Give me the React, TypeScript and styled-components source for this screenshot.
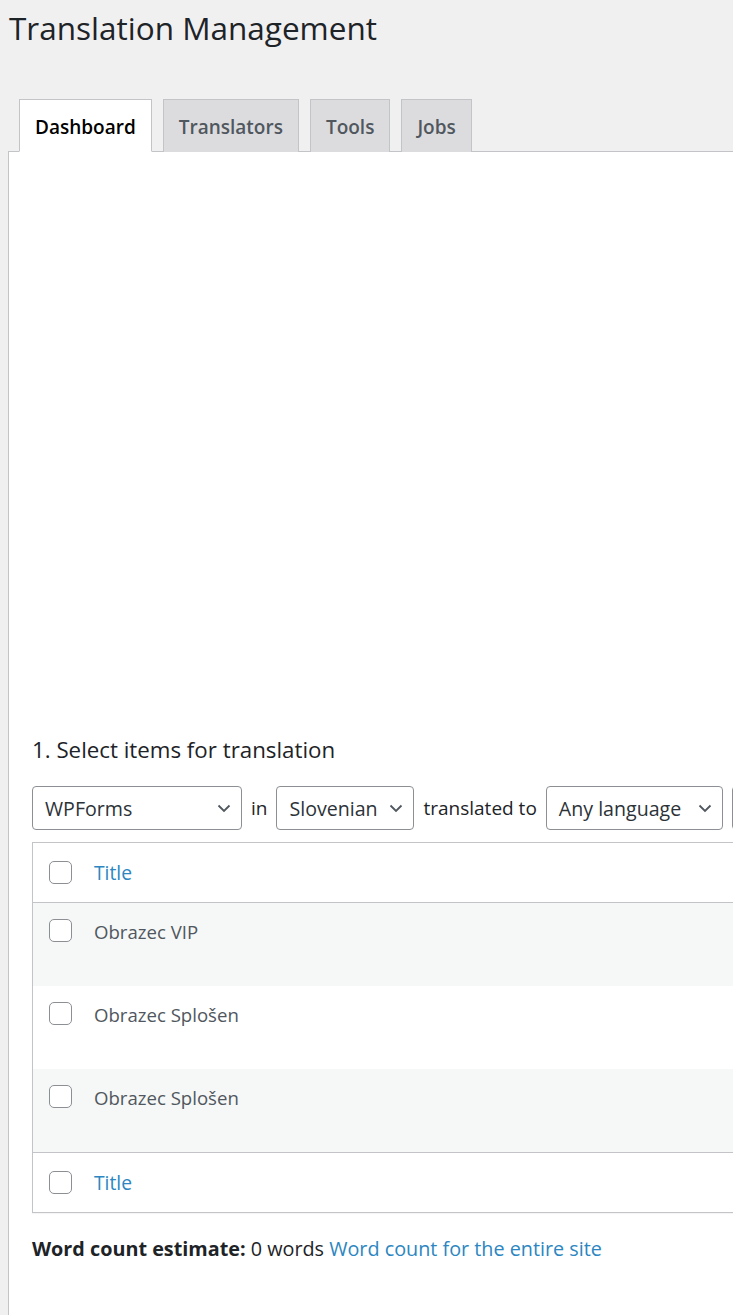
import styled, { createGlobalStyle } from "styled-components"

const GlobalStyle = createGlobalStyle`
body {
  margin: 0;
  background: #f0f0f1;
  font-family: "Open Sans", "Noto Sans", sans-serif;
  color: #3c434a;
}
`

const Page = styled.div`
  padding-left: 8px;
  min-height: 1315px;
  display: flex;
  flex-direction: column;
  overflow: hidden;
`

const Title = styled.h1`
  margin: 0;
  padding: 8px 0 0 1px;
  font-size: 31.5px;
  font-weight: 400;
  line-height: 40px;
  color: #1d2327;
`

const TabBar = styled.div`
  display: flex;
  gap: 11px;
  margin-top: 51px;
  padding-left: 11px;
  border-bottom: 1px solid #c3c4c7;
`

const Tab = styled.div<{ $active?: boolean }>`
  height: 53px;
  padding: 2px 15px 0;
  display: flex;
  align-items: center;
  font-size: 19px;
  font-weight: 600;
  border: 1px solid #c3c4c7;
  border-bottom: none;
  margin-bottom: -1px;
  box-sizing: border-box;
  background: ${(p) => (p.$active ? "#fff" : "#dcdcde")};
  color: ${(p) => (p.$active ? "#000" : "#50575e")};
  ${(p) => p.$active && "border-bottom: 1px solid #fff;"}
`

const Panel = styled.div`
  flex: 1;
  background: #fff;
  border-left: 1px solid #c3c4c7;
  padding-left: 23px;
  overflow: hidden;
`

const ChartArea = styled.div`
  height: 583px;
`

const SectionTitle = styled.h2`
  margin: 0;
  font-size: 22.3px;
  font-weight: 400;
  line-height: 30px;
  color: #1d2327;
`

const FilterRow = styled.div`
  display: flex;
  align-items: center;
  gap: 9px;
  margin-top: 21px;
  white-space: nowrap;
  font-size: 19px;
  color: #1d2327;
`

const Select = styled.div<{ $width: number }>`
  flex: none;
  width: ${(p) => p.$width}px;
  height: 44px;
  box-sizing: border-box;
  border: 1px solid #8c8f94;
  border-radius: 4px;
  padding: 0 9px 0 12px;
  display: flex;
  align-items: center;
  justify-content: space-between;
  font-size: 19.6px;
  color: #2c3338;
  background: #fff;
`

const Table = styled.div`
  width: 1000px;
  margin-top: 12px;
  border: 1px solid #c3c4c7;
  box-shadow: 0 1px 1px rgba(0, 0, 0, 0.04);
`

const Row = styled.div<{ $kind: "head" | "odd" | "even" | "foot" }>`
  display: flex;
  align-items: ${(p) => (p.$kind === "head" || p.$kind === "foot" ? "center" : "flex-start")};
  height: ${(p) => (p.$kind === "head" || p.$kind === "foot" ? 60 : 83)}px;
  box-sizing: border-box;
  padding: ${(p) => (p.$kind === "head" || p.$kind === "foot" ? "0" : "16px 0 0")} 16px;
  background: ${(p) => (p.$kind === "odd" ? "#f6f7f7" : "#fff")};
  ${(p) => p.$kind === "head" && "border-bottom: 1px solid #c3c4c7;"}
  ${(p) => p.$kind === "foot" && "border-top: 1px solid #c3c4c7;"}
`

const Check = styled.span`
  flex: none;
  width: 23px;
  height: 23px;
  box-sizing: border-box;
  border: 1px solid #8c8f94;
  border-radius: 5px;
  background: #fff;
  margin-right: 22px;
`

const CellText = styled.span`
  font-size: 18.6px;
  line-height: 26px;
  color: #50575e;
`

const HeadLink = styled.a`
  font-size: 19.3px;
  color: #2c86c1;
  text-decoration: none;
`

const WordCount = styled.p`
  margin: 22px 0 0;
  font-size: 19.8px;
  color: #1d2327;
  b {
    font-weight: 700;
  }
  a {
    color: #2c86c1;
    text-decoration: none;
  }
`

const Chevron = () => (
  <svg width="16" height="16" viewBox="0 0 16 16" fill="none">
    <path d="M2.5 5.5 8 11l5.5-5.5" stroke="#50575e" strokeWidth="1.8" />
  </svg>
)

const rows = ["Obrazec VIP", "Obrazec Splošen", "Obrazec Splošen"]

export default function App() {
  return (
    <>
      <GlobalStyle />
      <Page>
        <Title>Translation Management</Title>
        <TabBar>
          <Tab $active>Dashboard</Tab>
          <Tab>Translators</Tab>
          <Tab>Tools</Tab>
          <Tab>Jobs</Tab>
        </TabBar>
        <Panel>
          <ChartArea />
          <SectionTitle>1. Select items for translation</SectionTitle>
          <FilterRow>
            <Select $width={210}>
              WPForms <Chevron />
            </Select>
            <span>in</span>
            <Select $width={138}>
              Slovenian <Chevron />
            </Select>
            <span>translated to</span>
            <Select $width={177}>
              Any language <Chevron />
            </Select>
            <Select $width={120} />
          </FilterRow>
          <Table>
            <Row $kind="head">
              <Check />
              <HeadLink href="#">Title</HeadLink>
            </Row>
            {rows.map((name, i) => (
              <Row key={i} $kind={i % 2 === 0 ? "odd" : "even"}>
                <Check />
                <CellText>{name}</CellText>
              </Row>
            ))}
            <Row $kind="foot">
              <Check />
              <HeadLink href="#">Title</HeadLink>
            </Row>
          </Table>
          <WordCount>
            <b>Word count estimate:</b> 0 words <a href="#">Word count for the entire site</a>
          </WordCount>
        </Panel>
      </Page>
    </>
  )
}
